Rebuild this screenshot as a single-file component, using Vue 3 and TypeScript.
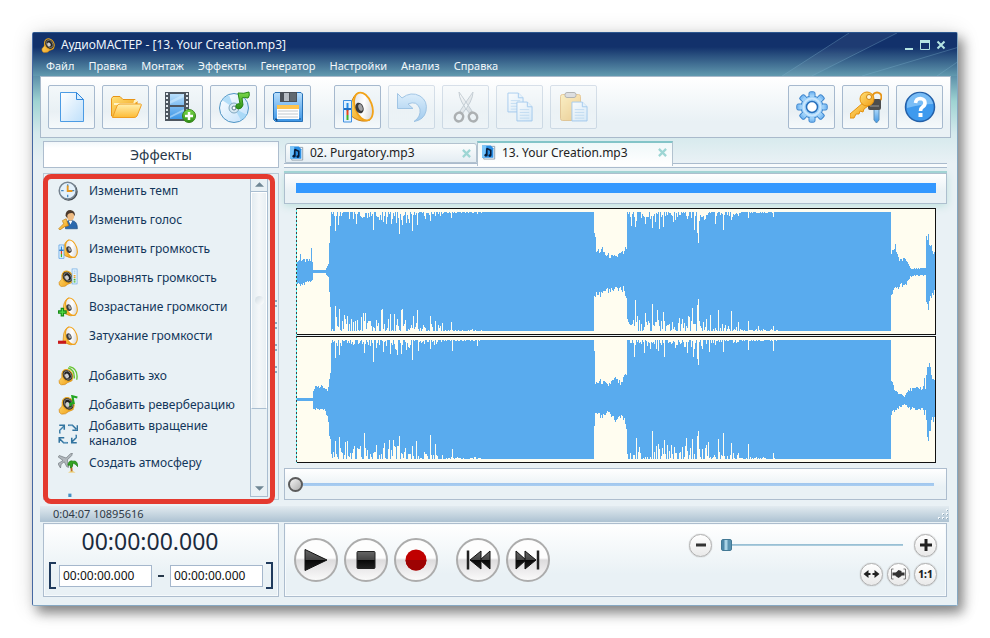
<script setup lang="ts">
import { computed, ref } from 'vue'

interface Tool { icon: string; label: string; disabled?: boolean; apart?: boolean }
interface Effect { icon: string; label: string; apart?: boolean }
interface Key { x: number; top: number; bottom: number }
interface Channel { intro: Key[]; bridge: Key[]; outro: Key[]; top: Record<number, number>; bottom: Record<number, number>; seed: number }

const menu = ['Файл', 'Правка', 'Монтаж', 'Эффекты', 'Генератор', 'Настройки', 'Анализ', 'Справка']

const tools: Tool[] = [
  { icon: 'file', label: 'Создать' },
  { icon: 'folder', label: 'Открыть' },
  { icon: 'film', label: 'Извлечь звук из видео' },
  { icon: 'disc', label: 'Захват с диска' },
  { icon: 'floppy', label: 'Сохранить' },
  { icon: 'mixer', label: 'Громкость', apart: true },
  { icon: 'undo', label: 'Отменить', disabled: true },
  { icon: 'cut', label: 'Вырезать', disabled: true },
  { icon: 'copy', label: 'Копировать', disabled: true },
  { icon: 'paste', label: 'Вставить', disabled: true },
]
const sideTools: Tool[] = [
  { icon: 'gear', label: 'Настройки' },
  { icon: 'keys', label: 'Регистрация' },
  { icon: 'help', label: 'Справка' },
]

const effects: Effect[] = [
  { icon: 'clock', label: 'Изменить темп' },
  { icon: 'person', label: 'Изменить голос' },
  { icon: 'mixer', label: 'Изменить громкость' },
  { icon: 'level', label: 'Выровнять громкость' },
  { icon: 'fadein', label: 'Возрастание громкости' },
  { icon: 'fadeout', label: 'Затухание громкости' },
  { icon: 'echo', label: 'Добавить эхо', apart: true },
  { icon: 'reverb', label: 'Добавить реверберацию' },
  { icon: 'rotate', label: 'Добавить вращение каналов' },
  { icon: 'travel', label: 'Создать атмосферу' },
]

const tabs = ['02. Purgatory.mp3', '13. Your Creation.mp3']
const active = ref(1)
const title = computed(() => `АудиоМАСТЕР - [${tabs[active.value]}]`)
const position = ref(0)
const zoom = ref(0)
const from = ref('00:00:00.000')
const to = ref('00:00:00.000')
const teeth = [0, 45, 90, 135, 180, 225, 270, 315]

const channels: Channel[] = [
  {
    seed: 3,
    intro: [
      { x: 0, top: 10, bottom: 13 }, { x: 3, top: 11, bottom: 14 }, { x: 4, top: 20, bottom: 15 }, { x: 5, top: 11, bottom: 14 },
      { x: 14, top: 11, bottom: 10 }, { x: 15, top: 22, bottom: 10 }, { x: 16, top: 10, bottom: 9 },
      { x: 17, top: 2, bottom: 2 }, { x: 29, top: 2, bottom: 2 }, { x: 32, top: 8, bottom: 6 }, { x: 34, top: 40, bottom: 34 },
    ],
    bridge: [
      { x: 298, top: 40, bottom: 26 }, { x: 300, top: 20, bottom: 21 }, { x: 306, top: 21, bottom: 23 },
      { x: 310, top: 16, bottom: 20 }, { x: 318, top: 14, bottom: 17 }, { x: 329, top: 19, bottom: 18 }, { x: 331, top: 24, bottom: 26 },
    ],
    outro: [
      { x: 596, top: 19, bottom: 20 }, { x: 600, top: 24, bottom: 18 }, { x: 604, top: 12, bottom: 14 }, { x: 611, top: 12, bottom: 12 },
      { x: 615, top: 4, bottom: 5 }, { x: 630, top: 3, bottom: 4 }, { x: 631, top: 34, bottom: 30 }, { x: 633, top: 34, bottom: 36 }, { x: 636, top: 24, bottom: 24 }, { x: 639, top: 18, bottom: 20 },
    ],
    top: { 39: 20, 42: 13, 60: 12, 77: 18, 87: 10, 90: 12, 95: 12, 100: 11, 103: 23, 106: 13, 116: 20, 121: 13, 129: 7, 134: 9, 155: 6, 181: 2, 336: 14, 340: 15, 350: 12, 357: 16, 364: 17, 368: 15, 399: 19, 402: 22, 403: 32, 420: 12, 428: 18, 436: 8, 453: 6, 478: 5 },
    bottom: { 39: 26, 43: 23, 51: 15, 55: 12, 69: 18, 85: 22, 86: 23, 92: 12, 101: 12, 105: 22, 106: 23, 117: 15, 121: 22, 134: 15, 139: 10, 155: 9, 340: 32, 350: 18, 357: 28, 362: 22, 368: 20, 384: 13, 397: 24, 402: 27, 403: 33, 415: 16, 423: 22, 436: 21, 453: 10, 463: 5, 478: 5 },
  },
  {
    seed: 11,
    intro: [
      { x: 0, top: 2, bottom: 2 }, { x: 16, top: 2, bottom: 2 }, { x: 17, top: 10, bottom: 10 }, { x: 21, top: 14, bottom: 9 },
      { x: 28, top: 11, bottom: 10 }, { x: 31, top: 9, bottom: 15 }, { x: 34, top: 24, bottom: 46 },
    ],
    bridge: [
      { x: 298, top: 42, bottom: 28 }, { x: 299, top: 16, bottom: 15 }, { x: 305, top: 18, bottom: 17 }, { x: 311, top: 14, bottom: 13 },
      { x: 319, top: 20, bottom: 20 }, { x: 326, top: 15, bottom: 15 }, { x: 331, top: 26, bottom: 26 },
    ],
    outro: [
      { x: 596, top: 20, bottom: 14 }, { x: 600, top: 8, bottom: 10 }, { x: 609, top: 4, bottom: 5 }, { x: 613, top: 10, bottom: 9 },
      { x: 621, top: 11, bottom: 10 }, { x: 628, top: 12, bottom: 10 }, { x: 629, top: 23, bottom: 17 }, { x: 630, top: 12, bottom: 10 },
      { x: 632, top: 33, bottom: 35 }, { x: 635, top: 34, bottom: 35 }, { x: 636, top: 22, bottom: 22 }, { x: 639, top: 18, bottom: 20 },
    ],
    top: { 39: 19, 43: 15, 68: 13, 77: 23, 87: 12, 94: 14, 101: 15, 105: 14, 116: 21, 122: 11, 134: 9, 156: 11, 181: 6, 339: 17, 349: 13, 369: 17, 392: 13, 398: 17, 402: 20, 403: 26, 414: 12, 428: 12, 453: 10, 478: 11 },
    bottom: { 39: 18, 43: 23, 51: 18, 62: 10, 68: 27, 80: 14, 93: 20, 97: 20, 103: 24, 116: 13, 120: 19, 134: 25, 139: 15, 156: 10, 341: 22, 357: 29, 369: 20, 391: 22, 397: 21, 402: 24, 403: 29, 413: 17, 423: 21, 428: 27, 436: 16, 453: 15, 478: 6 },
  },
]

function noise(n: number): number {
  const s = Math.sin(n * 12.9898) * 43758.5453
  return s - Math.floor(s)
}

function along(keys: Key[], x: number, side: 'top' | 'bottom'): number {
  for (let i = 1; i < keys.length; i++) {
    if (x <= keys[i].x) {
      const a = keys[i - 1]
      const b = keys[i]
      return a[side] + ((b[side] - a[side]) * (x - a.x)) / (b.x - a.x)
    }
  }
  return keys[keys.length - 1][side]
}

function height(c: Channel, x: number, side: 'top' | 'bottom'): number {
  const shift = side === 'top' ? 0 : 1000
  const keys = x < 35 ? c.intro : x >= 298 && x < 332 ? c.bridge : x >= 596 ? c.outro : null
  if (keys) {
    const v = along(keys, x, side)
    return Math.max(1, Math.round(v + (noise(x + c.seed + shift) - 0.4) * v * 0.35))
  }
  const set = c[side][x]
  if (set) return 61 - set
  const into = x < 298 ? x - 35 : x - 332
  const reach = side === 'top' ? 12 : 19
  if (into > 150) return 61
  const fade = into < 80 ? 1 : into < 112 ? 0.5 : 0.12
  const r = noise(x * 1.7 + c.seed * 7 + shift)
  return r < 0.3 ? 61 : Math.round(61 - (r - 0.3) * 1.4 * reach * fade * (0.35 + 0.65 * noise(x + 9 + shift)))
}

function outline(c: Channel): string {
  let up = 'M0 64'
  let down = ''
  for (let x = 0; x < 640; x++) {
    up += `V${64 - height(c, x, 'top')}H${x + 1}`
  }
  for (let x = 639; x >= 0; x--) {
    down += `V${64 + height(c, x, 'bottom')}H${x}`
  }
  return `${up}${down}Z`
}

const waves = channels.map(outline)
</script>

<template>
  <div class="page">
    <svg class="defs" aria-hidden="true">
      <defs>
        <linearGradient id="paper" x1="0" y1="0" x2="1" y2="1"><stop offset="0" stop-color="#fff" /><stop offset="1" stop-color="#bfe0fb" /></linearGradient>
        <linearGradient id="gold" x1="0" y1="0" x2="1" y2="1"><stop offset="0" stop-color="#ffe27a" /><stop offset="1" stop-color="#f09a10" /></linearGradient>
        <linearGradient id="sun" x1="0" y1="0" x2="0" y2="1"><stop offset="0" stop-color="#fff0b0" /><stop offset="1" stop-color="#fdbb35" /></linearGradient>
        <linearGradient id="sky" x1="0" y1="0" x2="0" y2="1"><stop offset="0" stop-color="#b9dffc" /><stop offset="1" stop-color="#3d96e6" /></linearGradient>
        <linearGradient id="steel" x1="0" y1="0" x2="1" y2="1"><stop offset="0" stop-color="#fff" /><stop offset="1" stop-color="#aab4bc" /></linearGradient>
        <linearGradient id="leaf" x1="0" y1="0" x2="0" y2="1"><stop offset="0" stop-color="#7ddb4b" /><stop offset="1" stop-color="#2c8d14" /></linearGradient>
        <linearGradient id="coal" x1="0" y1="0" x2="0" y2="1"><stop offset="0" stop-color="#666" /><stop offset=".5" stop-color="#444" /><stop offset=".52" stop-color="#080808" /><stop offset="1" stop-color="#222" /></linearGradient>
        <linearGradient id="cone" x1="0" y1="0" x2="1" y2="1"><stop offset="0" stop-color="#d9d9dc" /><stop offset=".5" stop-color="#fff" /><stop offset="1" stop-color="#c6c6c9" /></linearGradient>
      </defs>
      <symbol id="file" viewBox="0 0 32 32"><path d="M4.500 1.500H20.500L27.500 8.500V30.500H4.500Z" fill="url(#paper)" stroke="#4b9be4" /><path d="M20.500 1.500V8.500H27.500Z" fill="#d8edfd" stroke="#3288dc" /></symbol>
      <symbol id="folder" viewBox="0 0 32 32"><path d="M1.500 25V7.500L3 5.500H10L13 8.500H25L27 10.500V14L6 26Z" fill="url(#gold)" stroke="#e79417" /><path d="M4 13H24L25 10H27" fill="none" stroke="#fff3c4" stroke-width="2" /><path d="M2.500 26.500L7 15Q8 13 10 13H30.500Q32 13 31 15L27 25Q26 26.500 24 26.500Z" fill="url(#sun)" stroke="#ef9e22" /></symbol>
      <symbol id="film" viewBox="0 0 32 32"><path d="M1 1H25V30H1Z" fill="#4d5660" /><path d="M6 3H20V14H6ZM6 16H20V28H6Z" fill="url(#sky)" /><path d="M3 2V30M23 2V30" stroke="#e4ebf0" stroke-width="2" stroke-dasharray="2 2" /><path d="M6 10L20 3V6L6 13ZM6 25L20 18V20L6 27Z" fill="#d8efff" opacity=".5" /><circle cx="25" cy="25" r="6.500" fill="url(#leaf)" stroke="#37821b" /><path d="M25 21V29M21 25H29" stroke="#fff" stroke-width="2.500" /></symbol>
      <symbol id="disc" viewBox="0 0 32 32"><circle cx="16" cy="17" r="14.500" fill="url(#paper)" stroke="#4f94c4" /><path d="M16 17L4 9A15 15 0 0 1 11 4ZM16 17L29 24A14 14 0 0 1 23 29Z" fill="#9ed4f5" opacity=".75" /><circle cx="16" cy="17" r="5" fill="#d8e9f3" stroke="#7fa7c0" /><circle cx="16" cy="17" r="2" fill="#fff" stroke="#5c7d92" /><path d="M20 2Q26 3 31 1Q32 5 30 7Q26 6 24 7L25 14Q24 18 20 18Q17 17 18 14Q20 12 22 13Z" fill="url(#leaf)" stroke="#268515" /></symbol>
      <symbol id="floppy" viewBox="0 0 32 32"><path d="M1.500 3L3 1.500H29L30.500 3V30.500H3.500L1.500 28.500Z" fill="url(#sky)" stroke="#2872b8" /><path d="M8 1H25V11H8Z" fill="#4b525a" /><path d="M12 2H17V10H12Z" fill="#b6bdc4" /><path d="M18 2H24V10H18Z" fill="#606970" /><path d="M5 14H27V28H5Z" fill="#fff" /><path d="M5 14H27V18H5Z" fill="#ffc44d" /><path d="M6 20H26M6 23H26M6 26H26" stroke="#c3c9ce" /><path d="M3 28H5V30M27 28H29" stroke="#20588f" /></symbol>
      <symbol id="horn" viewBox="0 0 32 32"><path d="M9 13Q11 4 17 1.500L28 29Q20 32 12 27L8 24Z" fill="url(#gold)" stroke="#d07f0c" /><ellipse cx="21.500" cy="15.500" rx="8.500" ry="14.500" transform="rotate(-20 21.500 15.500)" fill="url(#cone)" stroke="#f2a318" stroke-width="1.800" /><ellipse cx="17.500" cy="17" rx="4" ry="5.500" transform="rotate(-20 17.500 17)" fill="#3a3a3c" /><ellipse cx="18.500" cy="16.500" rx="2" ry="3.500" transform="rotate(-20 18.500 16.500)" fill="#a3a3a6" /></symbol>
      <symbol id="speaker" viewBox="0 0 32 32"><path d="M2 23L7 17L8 8L14 3L27 23L18 27Q14 32 6 31Q1 29 2 23Z" fill="url(#gold)" stroke="#c87b0b" /><ellipse cx="18" cy="13" rx="9.500" ry="12" transform="rotate(-35 18 13)" fill="#3d3830" stroke="#eca81f" stroke-width="2" /><ellipse cx="18.500" cy="12.500" rx="6" ry="8.500" transform="rotate(-35 18.500 12.500)" fill="#222" stroke="#8d8b86" stroke-width="1.500" /><ellipse cx="17" cy="14" rx="3.500" ry="4.500" transform="rotate(-35 17 14)" fill="#cfcfcf" /></symbol>
      <symbol id="mixer" viewBox="0 0 32 32"><use href="#horn" width="32" height="32" /><path d="M1.500 9.500H9.500V31H1.500Z" fill="#dff1ff" stroke="#3e8fe0" /><path d="M5.500 12V20" stroke="#258ce6" stroke-width="2" /><path d="M5.500 19V24" stroke="#e4481c" stroke-width="2" /><path d="M5.500 24V29" stroke="#45b41f" stroke-width="2" /><path d="M2 18H9" stroke="#1e6fc4" stroke-width="2" /></symbol>
      <symbol id="undo" viewBox="0 0 32 32"><path d="M1.500 2.500L6 7Q15 0 24 5Q32 10 30 20Q28 29 18 30.500Q25 26 24 18Q21 9 12 13L17 17.500H1.500Z" fill="url(#sky)" stroke="#3181c9" /></symbol>
      <symbol id="cut" viewBox="0 0 32 32"><path d="M9 1Q9 10 20 23L22 20Q14 8 9 1ZM23 1Q23 10 12 23L10 20Q18 8 23 1Z" fill="url(#steel)" stroke="#8595a2" /><ellipse cx="9" cy="26" rx="4" ry="4.500" transform="rotate(30 9 26)" fill="none" stroke="#555" stroke-width="2.500" /><ellipse cx="23" cy="26" rx="4" ry="4.500" transform="rotate(-30 23 26)" fill="none" stroke="#555" stroke-width="2.500" /></symbol>
      <symbol id="sheet" viewBox="0 0 18 22"><path d="M1 1H12L17 6V21H1Z" fill="url(#paper)" stroke="#3d8fe0" /><path d="M12 1V6H17" fill="#d8edfd" stroke="#3d8fe0" /><path d="M4 9H14M4 12H14M4 15H14M4 18H14" stroke="#85bae9" /></symbol>
      <symbol id="copy" viewBox="0 0 32 32"><use href="#sheet" x="3" y="1" width="17" height="21" /><use href="#sheet" x="12" y="10" width="17" height="21" /></symbol>
      <symbol id="paste" viewBox="0 0 32 32"><rect x="2.500" y="3.500" width="20" height="26" rx="2" fill="url(#gold)" stroke="#d28a18" /><rect x="7" y="1.500" width="11" height="5" rx="2" fill="#bbb" stroke="#555" /><use href="#sheet" x="13" y="10" width="17" height="21" /></symbol>
      <symbol id="gear" viewBox="0 0 32 32"><rect v-for="t in teeth" :key="t" x="13" y=".8" width="6" height="7" rx="1.500" fill="#7fbef5" stroke="#3a83cc" :transform="`rotate(${t} 16 16)`" /><circle cx="16" cy="16" r="11" fill="#9bcff8" stroke="#3a83cc" /><rect v-for="t in teeth" :key="t + 400" x="13.600" y="3.500" width="4.800" height="4" fill="#9bcff8" :transform="`rotate(${t} 16 16)`" /><circle cx="16" cy="16" r="8.500" fill="none" stroke="#c9e6fd" stroke-width="2" /><circle cx="16" cy="16" r="5.500" fill="#fff" stroke="#2770bd" stroke-width="1.500" /></symbol>
      <symbol id="keys" viewBox="0 0 32 32"><circle cx="27" cy="6" r="4.500" fill="none" stroke="#e79518" stroke-width="2" /><path d="M24 17H29V29L26.500 32L24 29Z" fill="url(#sky)" stroke="#5d8fb8" /><rect x="18" y="8" width="13" height="11" rx="2" fill="#4d4d4d" /><path d="M20 15H29" stroke="#999" /><path d="M14 11L18 15L14 18L13 21L10 20L9 23L6 23L4 27H0V23Z" fill="url(#gold)" stroke="#e5920f" /><circle cx="17" cy="8" r="7" fill="url(#gold)" stroke="#e5920f" /><circle cx="19" cy="6" r="2.500" fill="#fff6d8" stroke="#cd8512" /></symbol>
      <symbol id="help" viewBox="0 0 32 32"><circle cx="16" cy="16" r="14.500" fill="#3e9aee" stroke="#2460a8" stroke-width="1.500" /><path d="M3 17A13 13 0 0 1 29 13Q18 13 3 17Z" fill="#8dc8f8" opacity=".75" /><path d="M11.500 12Q12 7.500 16.300 7.500Q21 8 21 12Q21 14.500 18.500 16Q16.500 17.500 16.500 20" fill="none" stroke="#fff" stroke-width="3.600" /><path d="M14.500 22H18.500V26H14.500Z" fill="#fff" /></symbol>
      <symbol id="clock" viewBox="0 0 32 32"><circle cx="17" cy="17" r="14.500" fill="#3f464c" /><circle cx="15.500" cy="15.500" r="13.500" fill="#e4f1fb" stroke="#76838f" stroke-width="2.500" /><path d="M15.500 5V9M15.500 22V26M5 15.500H9M22 15.500H26" stroke="#4584bb" stroke-width="2" /><path d="M15.500 7V16H23" fill="none" stroke="#e6971e" stroke-width="3" /></symbol>
      <symbol id="person" viewBox="0 0 32 32"><path d="M12 30V22Q15 15 23 17Q31 18 31 30Z" fill="#2b69ad" stroke="#184678" /><path d="M17 17L20 23L23 17Z" fill="#fff" /><ellipse cx="20" cy="9" rx="6" ry="8" fill="#eebb83" /><path d="M12 9Q12 0 20 0Q28 1 27 10L24 5Q17 4 15 8V13Z" fill="#4c3a2d" /><path d="M1 30L9 22L7 17L13 14L17 25L10 27L3 32Z" fill="url(#gold)" stroke="#b9740c" /></symbol>
      <symbol id="level" viewBox="0 0 32 32"><use href="#speaker" y="2" width="27" height="30" /><rect x="22.500" y="1.500" width="8" height="24" fill="#eaf6ff" stroke="#5da3e2" /><path d="M26.500 4V10" stroke="#aacde8" stroke-width="3" stroke-dasharray="2 1" /><path d="M26.500 11V16" stroke="#e8a42a" stroke-width="3" stroke-dasharray="2 1" /><path d="M26.500 17V24" stroke="#4ab434" stroke-width="3" stroke-dasharray="2 1" /></symbol>
      <symbol id="fadein" viewBox="0 0 32 32"><use href="#horn" width="32" height="32" /><path d="M7 17V31M0 24H14" stroke="#168c16" stroke-width="5.500" /><path d="M7 19V29M2 24H12" stroke="#55d946" stroke-width="2" /></symbol>
      <symbol id="fadeout" viewBox="0 0 32 32"><use href="#horn" width="32" height="32" /><path d="M0 26H13" stroke="#c91919" stroke-width="5" /></symbol>
      <symbol id="echo" viewBox="0 0 32 32"><use href="#speaker" y="3" width="27" height="29" /><path d="M16 3Q27 6 26 20M18 1Q33 4 30 22" fill="none" stroke="#67c431" stroke-width="2.200" /></symbol>
      <symbol id="reverb" viewBox="0 0 32 32"><use href="#speaker" y="2" width="29" height="30" /><path d="M20 18V14L25 13L23 2L31 4" fill="none" stroke="#22a621" stroke-width="3.500" /></symbol>
      <symbol id="rotate" viewBox="0 0 32 32"><g fill="none" stroke="#32749f" stroke-width="2.500"><path d="M3 15V10L9 4M2 2H10V9M16 2H23L29 8M31 2V10H23M29 17V22L23 28M22 22V30H30M16 30H9L3 24M2 30V22H10" /></g><path d="M4 14V10L9 5M17 3H23M28 18V22M15 29H9" stroke="#a5d1ef" fill="none" /></symbol>
      <symbol id="travel" viewBox="0 0 32 32"><path d="M2 4L13 8L20 1L23 0L22 4L15 11L17 23L14 22L10 14L5 18L4 24L1 19L0 17L8 12L0 6Z" fill="#b1b7bc" stroke="#666e74" /><path d="M23 15Q20 23 22 30" fill="none" stroke="#b66d25" stroke-width="3" /><path d="M16 18Q18 11 24 13Q31 11 32 22Q27 17 24 16Q24 23 20 24Q20 17 16 20Z" fill="#34a321" stroke="#1a7614" /><path d="M16 31Q22 27 28 31Z" fill="#f0c553" /></symbol>
      <symbol id="song" viewBox="0 0 16 16"><path d="M2 1H14.500V15.500H2Z" fill="#f4faff" stroke="#8899a7" /><path d="M0 0H10L13 3V14H0Z" fill="#2b8fe4" /><path d="M0 0H5L3 14H0Z" fill="#7cc6f9" /><path d="M5.500 3V11M5.500 3.500L10 5.500V11" fill="none" stroke="#081c38" stroke-width="1.800" /><circle cx="4.500" cy="11" r="1.700" fill="#081c38" /><circle cx="9" cy="11.500" r="1.600" fill="#081c38" /></symbol>
      <symbol id="play" viewBox="0 0 24 24"><path d="M1 1.500L23 12L1 22.500Z" fill="url(#coal)" stroke="#111" /></symbol>
      <symbol id="stop" viewBox="0 0 24 24"><rect x="3" y="3.500" width="18" height="17" rx="1" fill="url(#coal)" stroke="#222" /></symbol>
      <symbol id="record" viewBox="0 0 24 24"><circle cx="12" cy="12" r="10.500" fill="#c00000" /><path d="M1.500 12A10.500 10.500 0 0 0 22.500 12Z" fill="#9d0303" /></symbol>
      <symbol id="forward" viewBox="0 0 28 24"><path d="M2 3L12 12L2 21Z" fill="url(#coal)" stroke="#111" /><path d="M11 3L22 12L11 21Z" fill="url(#coal)" stroke="#111" /><path d="M24 2.500V21.500" stroke="#222" stroke-width="2.500" /></symbol>
      <symbol id="back" viewBox="0 0 28 24"><path d="M26 3L16 12L26 21Z" fill="url(#coal)" stroke="#111" /><path d="M17 3L6 12L17 21Z" fill="url(#coal)" stroke="#111" /><path d="M4 2.500V21.500" stroke="#222" stroke-width="2.500" /></symbol>
      <symbol id="minus" viewBox="0 0 14 14"><path d="M2 7H12" stroke="#333" stroke-width="3" /></symbol>
      <symbol id="plus" viewBox="0 0 14 14"><path d="M1 7H13M7 1V13" stroke="#222" stroke-width="3" /></symbol>
      <symbol id="fit" viewBox="0 0 16 14"><path d="M0 7L5 3V6H7V8H5V11ZM16 7L11 3V6H9V8H11V11Z" fill="#222" /></symbol>
      <symbol id="region" viewBox="0 0 16 14"><path d="M3 2H1V12H3M13 2H15V12H13" fill="none" stroke="#777" /><path d="M2 7H14" stroke="#333" stroke-width="3" /><path d="M5 6L8 3L11 4V9L8 11L5 9Z" fill="#333" /></symbol>
    </svg>

    <main class="window">
      <header class="top">
        <svg class="rays" viewBox="0 0 200 44" preserveAspectRatio="none" aria-hidden="true">
          <path d="M25 44L92 0H140L55 44Z" fill="#fff" opacity=".05" />
          <path d="M25 44L92 0M55 44L140 0M105 44L200 15M180 44L200 30" fill="none" stroke="#7db3cc" opacity=".35" />
        </svg>
        <div class="titlebar">
          <svg class="app-icon"><use href="#speaker" /></svg>
          <h1>{{ title }}</h1>
          <button class="win" type="button" aria-label="Свернуть"><svg viewBox="0 0 10 10"><path d="M1 9H9" stroke="#b5e3e2" stroke-width="2" /></svg></button>
          <button class="win" type="button" aria-label="Развернуть"><svg viewBox="0 0 10 10"><path d="M.5 1.500H9.500V9.500H.5Z" fill="none" stroke="#b5e3e2" /><path d="M0 1.500H10" stroke="#b5e3e2" stroke-width="3" /></svg></button>
          <button class="win" type="button" aria-label="Закрыть"><svg viewBox="0 0 10 10"><path d="M1.500 1.500L8.500 8.500M8.500 1.500L1.500 8.500" stroke="#b5e3e2" stroke-width="2" /></svg></button>
        </div>
        <nav class="menu"><a v-for="m in menu" :key="m" href="#">{{ m }}</a></nav>
      </header>

      <div class="toolbar">
        <button v-for="t in tools" :key="t.icon" class="tool" :class="{ apart: t.apart }" type="button" :disabled="t.disabled" :aria-label="t.label"><svg><use :href="'#' + t.icon" /></svg></button>
        <span class="grow"></span>
        <button v-for="t in sideTools" :key="t.icon" class="tool" type="button" :aria-label="t.label"><svg><use :href="'#' + t.icon" /></svg></button>
      </div>

      <div class="body">
        <aside class="side">
          <h2>Эффекты</h2>
          <div class="effects">
            <div class="list">
              <button v-for="e in effects" :key="e.label" class="effect" :class="{ gap: e.apart }" type="button">
                <svg><use :href="'#' + e.icon" /></svg><span>{{ e.label }}</span>
              </button>
              <div class="effect gap"><svg viewBox="0 0 32 32"><path d="M19 1V32" stroke="#458fc3" stroke-width="5" /></svg></div>
            </div>
            <div class="scroll">
              <button type="button" aria-label="Вверх"><svg viewBox="0 0 10 5"><path d="M0 5L5 0L10 5Z" fill="#6f8795" /></svg></button>
              <div class="thumb"><i></i></div>
              <span class="grow"></span>
              <button class="low" type="button" aria-label="Вниз"><svg viewBox="0 0 10 5"><path d="M0 0L5 5L10 0Z" fill="#6f8795" /></svg></button>
            </div>
            <div class="grip"></div>
            <div class="marker"></div>
          </div>
        </aside>

        <section class="editor">
          <div class="tabs">
            <div v-for="(t, i) in tabs" :key="t" class="tab" :class="{ on: i === active }">
              <svg class="song"><use href="#song" /></svg>
              <button class="name" type="button" @click="active = i">{{ t }}</button>
              <button class="close" type="button" :aria-label="`Закрыть ${t}`"><svg viewBox="0 0 8 8"><path d="M.8 .8L7.200 7.200M7.200 .8L.8 7.200" stroke="currentColor" stroke-width="2" /></svg></button>
            </div>
          </div>
          <div class="overview"><div class="span"></div></div>
          <div class="waves">
            <div v-for="(d, i) in waves" :key="i" class="channel">
              <svg viewBox="0 0 640 128" preserveAspectRatio="none" role="img" :aria-label="`Канал ${i + 1}`"><path :d="d" fill="#59abee" shape-rendering="crispEdges" /></svg>
            </div>
            <div class="cursor"></div>
          </div>
          <div class="seek"><input v-model="position" type="range" min="0" max="247" aria-label="Позиция" /></div>
        </section>
      </div>

      <div class="status"><span>0:04:07 10895616</span>
        <svg viewBox="0 0 10 10"><path d="M8 0H10V2H8ZM8 4H10V6H8ZM4 4H6V6H4ZM8 8H10V10H8ZM4 8H6V10H4ZM0 8H2V10H0Z" fill="#f4f9fc" /><path d="M9 1H10V2H9ZM9 5H10V6H9ZM5 5H6V6H5ZM9 9H10V10H9ZM5 9H6V10H5ZM1 9H2V10H1Z" fill="#8ba5b7" /></svg>
      </div>

      <footer class="bottom">
        <div class="panel timer">
          <output>00:00:00.000</output>
          <div class="range">
            <i class="bracket"></i>
            <input v-model="from" type="text" aria-label="Начало фрагмента" />
            <b></b>
            <input v-model="to" type="text" aria-label="Конец фрагмента" />
            <i class="bracket end"></i>
          </div>
        </div>
        <div class="panel player">
          <div class="transport">
            <button class="round" type="button" aria-label="Воспроизвести"><svg><use href="#play" /></svg></button>
            <button class="round" type="button" aria-label="Стоп"><svg><use href="#stop" /></svg></button>
            <button class="round" type="button" aria-label="Запись"><svg><use href="#record" /></svg></button>
            <button class="round skip" type="button" aria-label="В начало"><svg><use href="#back" /></svg></button>
            <button class="round wide" type="button" aria-label="В конец"><svg><use href="#forward" /></svg></button>
          </div>
          <div class="zoom">
            <div class="zoom-row">
              <button class="small" type="button" aria-label="Уменьшить"><svg><use href="#minus" /></svg></button>
              <input v-model="zoom" type="range" min="0" max="100" aria-label="Масштаб" />
              <button class="small" type="button" aria-label="Увеличить"><svg><use href="#plus" /></svg></button>
            </div>
            <div class="zoom-row tight">
              <button class="small" type="button" aria-label="Весь файл"><svg><use href="#fit" /></svg></button>
              <button class="small" type="button" aria-label="Выделенный фрагмент"><svg><use href="#region" /></svg></button>
              <button class="small" type="button">1:1</button>
            </div>
          </div>
        </div>
      </footer>
    </main>
  </div>
</template>

<style>
body { background: #fff; }
</style>

<style scoped>
* { box-sizing: border-box; }
.page { height: 100vh; min-height: 520px; padding: 32px; font-family: "Noto Sans", "Open Sans", sans-serif; font-size: 12px; color: #12365a; }
.defs { position: absolute; width: 0; height: 0; }
button { font: inherit; color: inherit; padding: 0; margin: 0; border: 0; background: none; }
svg { display: block; flex: none; }
.grow { flex: 1; }
.window { height: 100%; display: flex; flex-direction: column; border: 1px solid #86a8c2; border-top-color: #2c578f; border-left-color: #4568a2; border-radius: 2px; background: linear-gradient(#14326c 18px, #5f93ab 44px, #9ed3d2 68px, #d4e9ec 100px, #e9f1f5 130px); box-shadow: 5px 7px 12px rgba(0, 0, 0, .42), 1px 2px 22px rgba(0, 0, 0, .16); }
.top { position: relative; height: 43px; display: flex; flex-direction: column; background: linear-gradient(#12316b 14px, #629aaf 43px); }
.rays { position: absolute; right: 0; top: 0; width: 200px; height: 43px; }
.titlebar { position: relative; height: 24px; display: flex; align-items: center; padding: 0 10px 0 8px; gap: 5px; }
.app-icon { width: 15px; height: 15px; }
h1 { flex: 1; margin: 0; font-size: 12px; font-weight: 400; color: #eef5fb; line-height: 24px; }
.win { width: 11px; height: 11px; }
.win svg { width: 10px; height: 10px; }
.menu { position: relative; display: flex; gap: 14px; padding: 0 13px; line-height: 18px; font-size: 11px; }
.menu a { color: #f2f8fb; text-decoration: none; }
.toolbar { display: flex; gap: 7px; margin: 0 6px 0 7px; padding: 8px 7px; border: 1px solid #a9bacb; background: linear-gradient(#fff, #e9f1f5 75%); }
.tool { width: 47px; height: 44px; display: grid; place-items: center; border: 1px solid #a6b9ce; border-radius: 2px; background: linear-gradient(#f3f8fa, #e9f0f4 60%, #f5f9fb); }
.tool.apart { margin-left: 16px; }
.tool svg { width: 32px; height: 32px; }
.tool:disabled { opacity: .42; }
.body { flex: 1; min-height: 0; display: grid; grid-template-columns: 236px minmax(0, 1fr); grid-template-rows: minmax(0, 1fr); gap: 5px; padding: 3px 10px 6px; }
.side, .editor { display: flex; flex-direction: column; min-height: 0; min-width: 0; }
.side { gap: 5px; }
h2 { margin: 0; height: 27px; border: 1px solid #adbdce; background: linear-gradient(#f2f7fa, #fff 6px); text-align: center; font-size: 14px; font-weight: 400; line-height: 25px; color: #27384a; }
.effects { position: relative; flex: 1; min-height: 0; display: flex; border: 1px solid #b9c9d6; padding: 2px 10px 2px 14px; background: #e9f1f5; }
.list { flex: 1; overflow: hidden; }
.effect { width: 100%; height: 29px; display: flex; align-items: center; gap: 11px; text-align: left; line-height: 15px; }
.effect.gap { margin-top: 11px; }
.effect svg { width: 20px; height: 20px; }
.effect span { width: 160px; padding-bottom: 1px; }
.scroll { width: 18px; display: flex; flex-direction: column; border: 1px solid #a9bdd0; background: #e9f1f5; }
.scroll button { height: 15px; display: grid; place-items: center; border-bottom: 1px solid #a9bdd0; }
.scroll .low { border: 0; }
.scroll svg { width: 9px; height: 5px; }
.thumb { height: 217px; display: grid; place-items: center; border: 1px solid #fff; border-bottom-color: #a9bdd0; background: linear-gradient(90deg, #e4ecf1, #f4f7f9, #e8eff3); }
.thumb i { width: 9px; height: 9px; border-radius: 50%; background: linear-gradient(135deg, #d0dbe2, #fff); }
.grip { position: absolute; right: 1px; top: 126px; width: 2px; height: 76px; background: repeating-linear-gradient(#8aa8bd 0 2px, transparent 2px 5px, #8aa8bd 5px 7px, transparent 7px 22px); }
.marker { position: absolute; inset: 0 3px -5px -1px; border: 5px solid #e43a2f; border-radius: 8px; }
.tabs { height: 27px; display: flex; align-items: flex-start; position: relative; padding-left: 1px; background: linear-gradient(transparent 22px, #aabbcd 22px 23px, #f8fbfc 23px 26px, #aabbcd 26px); }
.tab { width: 192px; height: 20px; margin-top: 2px; display: flex; align-items: center; padding: 0 5px 0 4px; border: 1px solid #b2c2cf; border-radius: 3px 3px 0 0; background: linear-gradient(#fbfdfd, #e4edf3); color: #222; }
.tab.on { width: 196px; height: 25px; margin-top: 0; padding-bottom: 4px; border-top: 2px solid #83c4c8; border-bottom: 0; border-radius: 0; background: linear-gradient(#f0f8f9, #fff); }
.song { width: 14px; height: 15px; }
.name { flex: 1; text-align: left; padding-left: 6px; line-height: 18px; }
.close { width: 9px; color: #9ed6d4; }
.close svg { width: 9px; height: 9px; }
.overview { margin-top: 5px; height: 31px; padding: 9px 10px 10px 11px; border: 1px solid #adbfce; background: linear-gradient(#fff, #e9f1f5 60%); box-shadow: 0 -2px 0 #a2d3d4, 0 2px 8px #bfe2df; }
.span { height: 10px; background: #3398ff; }
.waves { position: relative; flex: 1; min-height: 0; display: flex; flex-direction: column; gap: 1px; margin: 4px 11px 5px 12px; }
.channel { flex: 1; min-height: 0; border: 1px solid #111; border-left: 0; background: #fffdf0; }
.channel svg { width: 100%; height: 100%; }
.cursor { position: absolute; left: 0; top: 0; bottom: 0; width: 1px; background: repeating-linear-gradient(#424242 0 2px, #5fffff 2px 4px); }
.seek { height: 32px; display: flex; align-items: center; padding: 0 4px 0 3px; border: 1px solid #adbdce; background: linear-gradient(#fff, #e9f1f5 60%); }
input[type="range"] { appearance: none; width: 100%; height: 16px; margin: 0; background: none; }
.seek input::-webkit-slider-runnable-track { height: 15px; background: linear-gradient(#9fc6ee, #a9cdf1) center / calc(100% - 16px) 3px no-repeat; }
.seek input::-webkit-slider-thumb { appearance: none; width: 15px; height: 15px; border: 2px solid #5b5b5b; border-radius: 50%; background: linear-gradient(135deg, #f4f4f4, #adadad); }
.status { height: 16px; margin: 0 8px 1px 7px; padding: 0 1px 0 13px; display: flex; align-items: center; justify-content: space-between; font-size: 11px; line-height: 16px; color: #303a46; background: linear-gradient(#e2ebf0, #adc2d2); }
.status svg { width: 10px; height: 10px; }
.bottom { display: grid; grid-template-columns: 236px minmax(0, 1fr); gap: 5px; padding: 0 10px 8px; }
.panel { height: 74px; border: 1px solid #adbdce; background: linear-gradient(#fff, #e9f1f5 70%); box-shadow: inset 0 0 0 1px #f6fafc; }
.timer { display: flex; flex-direction: column; padding: 2px 5px 0; gap: 4px; }
output { height: 32px; padding-right: 22px; text-align: center; font-size: 23px; line-height: 31px; color: #1b2b3e; }
.range { display: flex; align-items: center; gap: 3px; }
.range input { flex: 1; width: 0; height: 22px; padding: 0 3px; border: 1px solid #a5b7cc; background: #fff; font: 12px "Noto Sans", sans-serif; color: #111; outline: 0; }
.range b { width: 6px; height: 2px; margin: 0 3px; background: #26384a; }
.bracket { width: 7px; height: 27px; border: 2px solid #1f3a5c; border-right: 0; }
.bracket.end { border-right: 2px solid #1f3a5c; border-left: 0; }
.player { display: flex; align-items: center; justify-content: space-between; padding: 0 9px; }
.transport { display: flex; gap: 6px; }
.round { width: 44px; height: 44px; display: grid; place-items: center; border: 2px solid #acacac; border-radius: 50%; background: linear-gradient(#fdfdfd 45%, #dddcdd 50%, #fafafa); }
.round svg { width: 24px; height: 24px; }
.round.skip { margin-left: 12px; }
.round.skip svg, .round.wide svg { width: 28px; }
.zoom { display: flex; flex-direction: column; align-items: flex-end; gap: 6px; padding-bottom: 1px; }
.zoom-row { display: flex; align-items: center; gap: 9px; }
.zoom-row.tight { gap: 4px; }
.small { width: 23px; height: 23px; display: grid; place-items: center; border: 1px solid #b0b0b0; border-radius: 50%; background: linear-gradient(#fff, #e9e9e9); font-size: 10px; font-weight: 800; line-height: 20px; color: #222; box-shadow: 0 0 1px #999; }
.small svg { width: 14px; height: 14px; }
.tight .small svg { width: 17px; }
.zoom input { width: 184px; }
.zoom input::-webkit-slider-runnable-track { height: 12px; background: linear-gradient(#8fb9d0, #b4d2e1) center / calc(100% - 4px) 2px no-repeat; }
.zoom input::-webkit-slider-thumb { appearance: none; width: 11px; height: 12px; border: 1px solid #437995; border-radius: 2px; background: linear-gradient(90deg, #4d88a9 2px, #a9d3e6 3px 5px, #5993b1 6px); }
</style>
